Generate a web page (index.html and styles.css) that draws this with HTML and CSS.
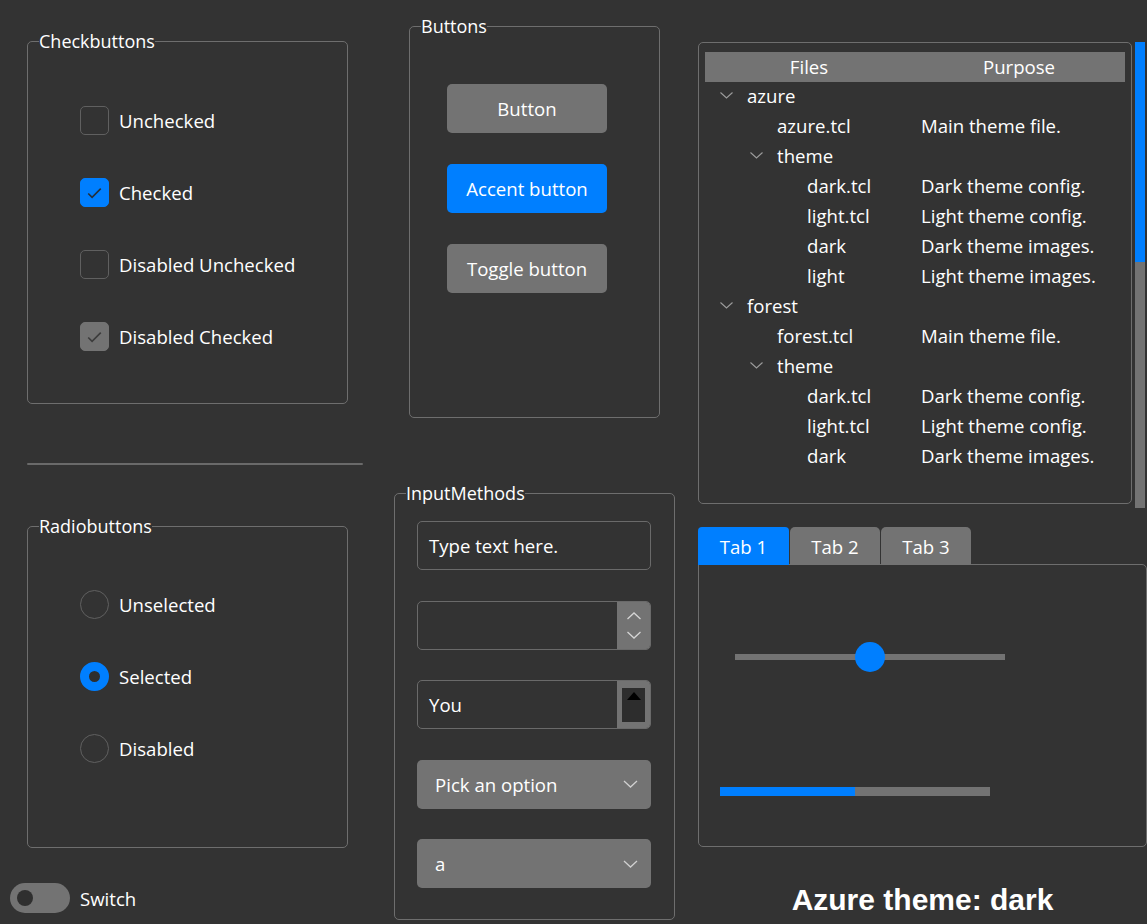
FILE: index.html
```html
<!DOCTYPE html>
<html>
<head>
<meta charset="utf-8">
<title>Azure theme</title>
<link rel="stylesheet" href="styles.css">
</head>
<body>
<div class="app">
  <div class="col col1">
    <fieldset class="frame checks">
      <legend>Checkbuttons</legend>
      <div class="stack">
        <div class="check"><span class="box"></span><span>Unchecked</span></div>
        <div class="check"><span class="box on"><svg width="28" height="28" viewBox="0 0 28 28"><polyline points="7.5,14.5 11.5,18.5 20.5,9.5" fill="none" stroke="#25303c" stroke-width="1.7"/></svg></span><span>Checked</span></div>
        <div class="check"><span class="box"></span><span>Disabled Unchecked</span></div>
        <div class="check"><span class="box dis"><svg width="28" height="28" viewBox="0 0 28 28"><polyline points="7.5,14.5 11.5,18.5 20.5,9.5" fill="none" stroke="#3c3c3c" stroke-width="1.7"/></svg></span><span>Disabled Checked</span></div>
      </div>
    </fieldset>
    <div class="sep"></div>
    <fieldset class="frame radios">
      <legend>Radiobuttons</legend>
      <div class="stack">
        <div class="check"><span class="radio"></span><span>Unselected</span></div>
        <div class="check"><span class="radio sel"></span><span>Selected</span></div>
        <div class="check"><span class="radio"></span><span>Disabled</span></div>
      </div>
    </fieldset>
    <div class="switch-row"><span class="switch"><span class="knob"></span></span><span>Switch</span></div>
  </div>

  <div class="col col2">
    <fieldset class="frame buttons">
      <legend>Buttons</legend>
      <div class="btn-stack">
        <div class="btn">Button</div>
        <div class="btn accent">Accent button</div>
        <div class="btn">Toggle button</div>
      </div>
    </fieldset>
    <fieldset class="frame inputs">
      <legend>InputMethods</legend>
      <div class="input-stack">
        <div class="entry">Type text here.</div>
        <div class="entry spin">
          <span class="field"></span>
          <span class="side">
            <svg width="16" height="8" viewBox="0 0 16 8"><polyline points="1.5,7 8,1 14.5,7" fill="none" stroke="#d4d4d4" stroke-width="1.3"/></svg>
            <svg width="16" height="8" viewBox="0 0 16 8"><polyline points="1.5,1 8,7 14.5,1" fill="none" stroke="#d4d4d4" stroke-width="1.3"/></svg>
          </span>
        </div>
        <div class="entry spin you">
          <span class="field">You</span>
          <span class="side"><span class="trough"><svg width="14" height="8" viewBox="0 0 14 8"><polygon points="0,8 7,0 14,8" fill="#000"/></svg></span></span>
        </div>
        <div class="combo"><span>Pick an option</span><svg width="15" height="8" viewBox="0 0 15 8"><polyline points="1,1 7.5,7 14,1" fill="none" stroke="#d0d0d0" stroke-width="1.3"/></svg></div>
        <div class="combo"><span>a</span><svg width="15" height="8" viewBox="0 0 15 8"><polyline points="1,1 7.5,7 14,1" fill="none" stroke="#d0d0d0" stroke-width="1.3"/></svg></div>
      </div>
    </fieldset>
  </div>

  <div class="col col3">
    <div class="tree-row">
      <div class="tree">
        <div class="thead"><span>Files</span><span>Purpose</span></div>
        <div class="trow"><span class="tcell l0"><svg class="chev" width="13" height="7" viewBox="0 0 13 7"><polyline points="0.5,0.5 6.5,6 12.5,0.5" fill="none" stroke="#9c9c9c" stroke-width="1.1"/></svg>azure</span><span></span></div>
        <div class="trow"><span class="tcell leaf1">azure.tcl</span><span>Main theme file.</span></div>
        <div class="trow"><span class="tcell l1"><svg class="chev" width="13" height="7" viewBox="0 0 13 7"><polyline points="0.5,0.5 6.5,6 12.5,0.5" fill="none" stroke="#9c9c9c" stroke-width="1.1"/></svg>theme</span><span></span></div>
        <div class="trow"><span class="tcell leaf2">dark.tcl</span><span>Dark theme config.</span></div>
        <div class="trow"><span class="tcell leaf2">light.tcl</span><span>Light theme config.</span></div>
        <div class="trow"><span class="tcell leaf2">dark</span><span>Dark theme images.</span></div>
        <div class="trow"><span class="tcell leaf2">light</span><span>Light theme images.</span></div>
        <div class="trow"><span class="tcell l0"><svg class="chev" width="13" height="7" viewBox="0 0 13 7"><polyline points="0.5,0.5 6.5,6 12.5,0.5" fill="none" stroke="#9c9c9c" stroke-width="1.1"/></svg>forest</span><span></span></div>
        <div class="trow"><span class="tcell leaf1">forest.tcl</span><span>Main theme file.</span></div>
        <div class="trow"><span class="tcell l1"><svg class="chev" width="13" height="7" viewBox="0 0 13 7"><polyline points="0.5,0.5 6.5,6 12.5,0.5" fill="none" stroke="#9c9c9c" stroke-width="1.1"/></svg>theme</span><span></span></div>
        <div class="trow"><span class="tcell leaf2">dark.tcl</span><span>Dark theme config.</span></div>
        <div class="trow"><span class="tcell leaf2">light.tcl</span><span>Light theme config.</span></div>
        <div class="trow"><span class="tcell leaf2">dark</span><span>Dark theme images.</span></div>
      </div>
      <div class="vscroll"><div class="thumb"></div></div>
    </div>

    <div class="notebook">
      <div class="tabs">
        <div class="tab active">Tab 1</div>
        <div class="tab">Tab 2</div>
        <div class="tab">Tab 3</div>
      </div>
      <div class="pane">
        <div class="scale">
          <div class="track"></div>
          <div class="thumb-dot"></div>
        </div>
        <div class="progress"><div class="bar" style="width:50%"></div></div>
      </div>
    </div>
    <div class="title">Azure theme: dark</div>
  </div>
</div>
</body>
</html>
```

FILE: styles.css
```css
* { box-sizing: border-box; }

html, body {
  margin: 0;
  padding: 0;
  background: #333333;
}

body {
  width: 1147px;
  height: 924px;
  overflow: hidden;
  font-family: "Open Sans", "Noto Sans", sans-serif;
  font-size: 18.6px;
  color: #ffffff;
}

.app {
  display: flex;
  align-items: flex-start;
}

.col { display: flex; flex-direction: column; align-items: flex-start; }
.col1 { width: 394px; padding-top: 31px; }
.col2 { width: 304px; padding-top: 16px; }
.col3 { width: 449px; padding-top: 42px; }

/* Label frames */
.frame {
  margin: 0;
  padding: 0;
  min-width: 0;
  border: 1px solid #6e6e6e;
  border-radius: 5px;
}
.frame legend {
  margin-left: 11px;
  padding: 0;
  font-size: 18px;
  line-height: 20px;
  color: #ffffff;
}

.checks { margin-left: 27px; width: 321px; height: 373px; }
.checks .stack { padding: 55px 0 0 52px; }

.stack { display: flex; flex-direction: column; gap: 43px; }

.check {
  display: flex;
  align-items: center;
  height: 29px;
  gap: 10px;
  white-space: nowrap;
}
.check span:last-child { margin-top: -1px; }

.box {
  width: 29px;
  height: 29px;
  border: 1.5px solid #606060;
  border-radius: 5px;
  flex: none;
  display: flex;
  align-items: center;
  justify-content: center;
}
.box.on { background: #007fff; border-color: #007fff; }
.box.dis { background: #737373; border-color: #737373; }
.box svg { display: block; }

.sep {
  margin: 59px 0 0 27px;
  width: 336px;
  height: 2px;
  background: #6a6a6a;
  border-radius: 1px;
}

.radios { margin: 51px 0 0 27px; width: 321px; height: 332px; }
.radios .stack { padding: 54px 0 0 52px; }

.radio {
  width: 29px;
  height: 29px;
  border: 1.5px solid #606060;
  border-radius: 50%;
  flex: none;
}
.radio.sel {
  border: 9.5px solid #007fff;
  background: #2e2e2e;
}

.switch-row {
  margin: 35px 0 0 10px;
  display: flex;
  align-items: center;
  gap: 10px;
  height: 30px;
}
.switch {
  width: 60px;
  height: 30px;
  border-radius: 15px;
  background: #737373;
  display: flex;
  align-items: center;
  padding-left: 7px;
}
.knob {
  width: 16px;
  height: 16px;
  border-radius: 50%;
  background: #2f2f2f;
}

/* Buttons */
.buttons { margin-left: 15px; width: 251px; height: 402px; }
.btn-stack {
  display: flex;
  flex-direction: column;
  gap: 31px;
  padding: 48px 0 0 37px;
}
.btn {
  width: 160px;
  height: 49px;
  border-radius: 5px;
  background: #737373;
  display: flex;
  align-items: center;
  justify-content: center;
}
.btn.accent { background: #007fff; }

/* Input methods */
.inputs { margin-top: 65px; width: 281px; height: 437px; }
.input-stack {
  display: flex;
  flex-direction: column;
  gap: 30.5px;
  padding: 18px 0 0 22px;
}
.entry {
  width: 234px;
  height: 49px;
  border: 1.5px solid #6a6a6a;
  border-radius: 5px;
  display: flex;
  align-items: center;
  padding-left: 11px;
}
.spin { padding-left: 0; overflow: hidden; }
.spin .field { flex: 1; padding-left: 11px; }
.spin .side {
  width: 33px;
  height: 100%;
  background: #737373;
  display: flex;
  flex-direction: column;
  align-items: center;
  justify-content: center;
  gap: 11px;
}
.spin .side svg { display: block; }
.you .side { justify-content: flex-start; padding-top: 7px; }
.trough {
  width: 23px;
  height: 34px;
  background: #2d2d2d;
  display: flex;
  justify-content: center;
  padding-top: 4px;
}

.combo {
  width: 234px;
  height: 49px;
  border-radius: 5px;
  background: #737373;
  display: flex;
  align-items: center;
  justify-content: space-between;
  padding: 0 13px 0 18px;
}
.combo svg { display: block; }

/* Treeview */
.tree-row { display: flex; align-items: flex-start; }
.tree {
  width: 434px;
  height: 462px;
  border: 1px solid #6e6e6e;
  border-radius: 5px;
  padding: 9px 0 0 6px;
}
.thead {
  width: 420px;
  height: 30px;
  background: #737373;
  display: grid;
  grid-template-columns: 208px 212px;
  align-items: center;
  text-align: center;
  line-height: 28px;
}
.trow {
  height: 30px;
  display: grid;
  grid-template-columns: 216px 1fr;
  align-items: center;
  white-space: nowrap;
  line-height: 28px;
}
.trow > span { margin-top: -2px; }
.tcell { display: flex; align-items: center; }
.l0 { padding-left: 15px; }
.l1 { padding-left: 45px; }
.leaf1 { padding-left: 72px; }
.leaf2 { padding-left: 102px; }
.chev { display: block; margin-right: 14px; margin-top: -1px; flex: none; }

.vscroll {
  margin-left: 3px;
  width: 10px;
  height: 466px;
  background: #737373;
}
.vscroll .thumb {
  height: 220px;
  background: #007fff;
}

/* Notebook */
.notebook { margin-top: 19px; width: 449px; }
.tabs { display: flex; gap: 1px; position: relative; z-index: 1; margin-bottom: -1px; }
.tab {
  width: 91px;
  height: 38px;
  border-radius: 5px 5px 0 0;
  background: #737373;
  display: flex;
  align-items: center;
  justify-content: center;
}
.tab + .tab { width: 90px; }
.tab.active { background: #007fff; border-radius: 4px 4px 0 0; }
.pane {
  height: 283px;
  border: 1px solid #6e6e6e;
  border-radius: 0 5px 5px 5px;
  padding: 77px 0 0 36px;
}
.scale {
  position: relative;
  width: 270px;
  height: 30px;
  display: flex;
  align-items: center;
}
.track {
  width: 100%;
  height: 6px;
  background: #737373;
}
.thumb-dot {
  position: absolute;
  left: 120px;
  top: 0;
  width: 30px;
  height: 30px;
  border-radius: 50%;
  background: #007fff;
}
.progress {
  margin: 115px 0 0 -15px;
  width: 270px;
  height: 9px;
  background: #737373;
}
.progress .bar { height: 100%; background: #007fff; }

.title {
  margin-top: 36px;
  width: 449px;
  text-align: center;
  font-family: "Liberation Sans", Arial, sans-serif;
  font-weight: bold;
  font-size: 30px;
  line-height: 34px;
  color: #ffffff;
}
```
